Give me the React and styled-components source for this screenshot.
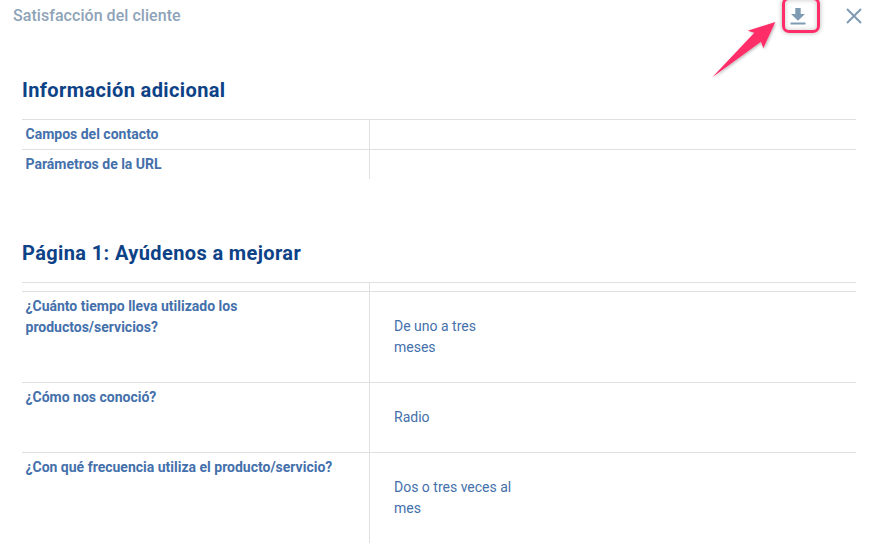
import React from 'react'
import styled, { createGlobalStyle } from 'styled-components'

const GlobalStyle = createGlobalStyle`
  html, body {
    margin: 0;
    padding: 0;
    background: #fff;
    height: 543px;
    overflow: hidden;
  }
`

const sections = [
  {
    title: 'Información adicional',
    rows: [
      { label: 'Campos del contacto' },
      { label: 'Parámetros de la URL' },
    ],
  },
  {
    title: 'Página 1: Ayúdenos a mejorar',
    rows: [
      { spacer: true },
      { label: '¿Cuánto tiempo lleva utilizado los productos/servicios?', value: 'De uno a tres meses', height: 91 },
      { label: '¿Cómo nos conoció?', value: 'Radio', height: 70 },
      { label: '¿Con qué frecuencia utiliza el producto/servicio?', value: 'Dos o tres veces al mes', height: 91 },
    ],
  },
]

const App = () => {
  return (
    <Page>
      <GlobalStyle />
      <TopBar>
        <DialogTitle>Satisfacción del cliente</DialogTitle>
        <DownloadButton aria-label="Descargar">
          <svg width="18" height="20" viewBox="0 0 18 20" fill="#7f9ab3">
            <path d="M6.300 2h5.400v6h4.300L9 14.700 2 8h4.300z" />
            <rect x="1.500" y="16.500" width="15" height="2" />
          </svg>
        </DownloadButton>
        <CloseButton aria-label="Cerrar">
          <svg width="16" height="16" viewBox="0 0 16 16" fill="none" stroke="#7f9ab3" strokeWidth="2">
            <path d="M1 1l14 14M15 1L1 15" />
          </svg>
        </CloseButton>
      </TopBar>
      <Content>
        {sections.map((section) => (
          <Section key={section.title}>
            <SectionTitle>{section.title}</SectionTitle>
            <Table>
              {section.rows.map((row, i) => (
                <Row key={i} $height={row.height} $spacer={row.spacer}>
                  <LabelCell>{row.label}</LabelCell>
                  <ValueCell>{row.value && <Value>{row.value}</Value>}</ValueCell>
                </Row>
              ))}
            </Table>
          </Section>
        ))}
      </Content>
      <Arrow width="891" height="100" viewBox="0 0 891 100">
        <defs>
          <filter id="arrowShadow" x="-20%" y="-20%" width="140%" height="140%">
            <feDropShadow dx="1" dy="1" stdDeviation="1.500" floodColor="#000" floodOpacity="0.3" />
          </filter>
        </defs>
        <path d="M775.300 22L747.700 30.700L754.300 32.700L712.300 77.300L761 41.700L763.300 48.300z" fill="#ff2d68" filter="url(#arrowShadow)" />
      </Arrow>
      <Highlight />
    </Page>
  )
}

export default App

const Page = styled.div`
  position: relative;
  width: 891px;
  height: 543px;
  overflow: hidden;
  background: #fff;
  font-family: Roboto, 'Liberation Sans', sans-serif;
`
const TopBar = styled.div`
  display: flex;
  align-items: center;
  height: 32px;
  padding: 0 28px 0 13px;
`
const DialogTitle = styled.div`
  flex: 1;
  margin-bottom: 2px;
  font-size: 16px;
  font-weight: 500;
  letter-spacing: 0.05px;
  color: #8ea3b8;
`
const DownloadButton = styled.div`
  display: flex;
  align-items: center;
  justify-content: center;
  width: 18px;
  height: 20px;
  margin-right: 38px;
`
const CloseButton = styled.div`
  display: flex;
  align-items: center;
  justify-content: center;
  width: 18px;
  height: 18px;
`
const Content = styled.div`
  padding: 0 35px 0 22px;
`
const Section = styled.section`
  padding-top: 61px;
  &:first-child {
    padding-top: 45px;
  }
`
const SectionTitle = styled.h2`
  margin: 0 0 16px;
  font-size: 20px;
  line-height: 26px;
  font-weight: 700;
  letter-spacing: 0.38px;
  color: #0d4287;
`
const Table = styled.div`
  display: flex;
  flex-direction: column;
`
const Row = styled.div`
  display: grid;
  grid-template-columns: 347px 1fr;
  box-sizing: border-box;
  height: ${(p) => (p.$height ? p.$height + 'px' : p.$spacer ? '9px' : '30px')};
  border-top: 1px solid #e0e0e0;
`
const LabelCell = styled.div`
  padding: 4px 4px 0 3.500px;
  font-size: 14px;
  line-height: 21px;
  font-weight: 700;
  color: #4470ab;
`
const ValueCell = styled.div`
  display: flex;
  align-items: center;
  padding-left: 24px;
  border-left: 1px solid #e0e0e0;
`
const Value = styled.div`
  width: 120px;
  font-size: 14px;
  line-height: 21px;
  color: #4470ab;
`
const Arrow = styled.svg`
  position: absolute;
  left: 0;
  top: 0;
  pointer-events: none;
`
const Highlight = styled.div`
  position: absolute;
  left: 782px;
  top: -3px;
  width: 38px;
  height: 36px;
  box-sizing: border-box;
  border: 3px solid #ff2d68;
  border-radius: 7px;
  box-shadow: 0 0 5px rgba(0, 0, 0, 0.3), inset 0 0 5px rgba(0, 0, 0, 0.22);
`
